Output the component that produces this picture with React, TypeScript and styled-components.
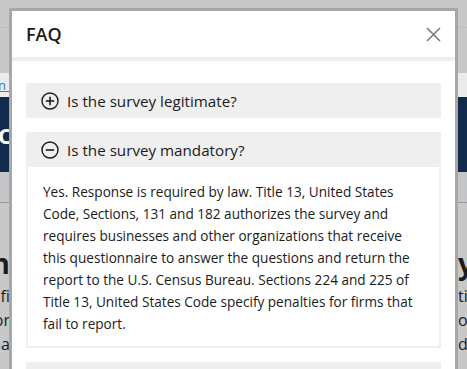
import styled, { createGlobalStyle } from "styled-components";

const GlobalStyle = createGlobalStyle`
  html, body {
    margin: 0;
    padding: 0;
    overflow: hidden;
    font-family: "Open Sans", "Noto Sans", sans-serif;
    color: #1b1b1b;
  }
`;

const Page = styled.div`
  width: 467px;
  height: 369px;
  background: #c8c8c8;
  display: flex;
  flex-direction: column;
`;

const TopBar = styled.div`
  height: 27px;
  border-bottom: 1px solid #bdbdbd;
`;

const SubBar = styled.div`
  height: 45px;
`;

const LinkBar = styled.div`
  height: 24px;
  background: #ebebeb;
  display: flex;
  align-items: center;
  overflow: hidden;

  a {
    width: 12px;
    overflow: hidden;
    margin-left: -2px;
    font-size: 13px;
    color: #2e7bcf;
    text-decoration: underline;
    white-space: nowrap;
  }
`;

const Hero = styled.div`
  height: 75px;
  background: #122b4c;
  display: flex;
  align-items: center;
  overflow: hidden;

  h1 {
    width: 12px;
    overflow: hidden;
    margin: 0 0 0 -2px;
    font-size: 22px;
    font-weight: 700;
    color: #ffffff;
    white-space: nowrap;
  }
`;

const NavBar = styled.div`
  height: 30px;
  background: #c5c6c9;
  border-bottom: 1px solid #9a9a9a;
`;

const Content = styled.div`
  flex: 1;
  display: flex;
  justify-content: space-between;
  padding-top: 44px;
  overflow: hidden;
`;

const Column = styled.div<{ $side: "left" | "right" }>`
  display: flex;
  flex-direction: column;
  align-items: ${({ $side }) => ($side === "left" ? "flex-end" : "flex-start")};
  width: 30px;
  margin-left: ${({ $side }) => ($side === "left" ? "-20px" : "0")};
  margin-right: ${({ $side }) => ($side === "right" ? "-21px" : "0")};
  white-space: nowrap;
  overflow: hidden;

  h2 {
    margin: 0 0 5px;
    font-size: 28px;
    line-height: 32px;
    font-weight: 700;
  }

  p {
    margin: 0;
    font-size: 16px;
    line-height: 24px;
  }
`;

const Modal = styled.div`
  position: fixed;
  top: 8px;
  left: 9px;
  width: 443px;
  height: 400px;
  background: #ffffff;
  border: 3px solid #a7a7a7;
  border-bottom: none;
  overflow: hidden;
`;

const ModalHeader = styled.div`
  height: 46px;
  padding: 0 14px;
  display: flex;
  align-items: center;
  justify-content: space-between;
  border-bottom: 4px solid #efefef;

  h2 {
    margin: 0;
    font-size: 18px;
    font-weight: 600;
    color: #1b1b1b;
  }
`;

const CloseButton = styled.button`
  width: 16px;
  height: 16px;
  padding: 0;
  border: none;
  background: none;
  display: flex;
  align-items: center;
  justify-content: center;
  cursor: pointer;
`;

const ModalBody = styled.div`
  padding: 22px 14px;
  display: flex;
  flex-direction: column;
  gap: 14px;
`;

const Item = styled.div`
  display: flex;
  flex-direction: column;
`;

const ItemHeader = styled.button`
  height: 35px;
  padding: 0 0 0 15px;
  border: none;
  background: #efefef;
  display: flex;
  align-items: center;
  gap: 8px;
  font-family: inherit;
  font-size: 15.2px;
  color: #1b1b1b;
  text-align: left;
  cursor: pointer;
`;

const Panel = styled.div`
  border: 2px solid #efefef;
  border-top: none;
  padding: 14px 15px 11px;
  font-size: 13.6px;
  line-height: 22px;
  color: #1b1b1b;
`;

const ToggleIcon = ({ open }: { open: boolean }) => (
  <svg width="18" height="18" viewBox="0 0 18 18" fill="none">
    <circle cx="9" cy="9" r="8" stroke="#1b1b1b" strokeWidth="1.4" />
    <line x1="4.8" y1="9" x2="13.2" y2="9" stroke="#1b1b1b" strokeWidth="1.6" />
    {!open && (
      <line x1="9" y1="4.8" x2="9" y2="13.2" stroke="#1b1b1b" strokeWidth="1.6" />
    )}
  </svg>
);

const faqs = [
  { q: "Is the survey legitimate?", a: "" },
  {
    q: "Is the survey mandatory?",
    a: "Yes. Response is required by law. Title 13, United States Code, Sections, 131 and 182 authorizes the survey and requires businesses and other organizations that receive this questionnaire to answer the questions and return the report to the U.S. Census Bureau. Sections 224 and 225 of Title 13, United States Code specify penalties for firms that fail to report.",
  },
  { q: "How do I report?", a: "" },
];

const openIndex = 1;

export default function App() {
  return (
    <>
      <GlobalStyle />
      <Page>
        <TopBar />
        <SubBar />
        <LinkBar>
          <a>n kn</a>
        </LinkBar>
        <Hero>
          <h1>Ce</h1>
        </Hero>
        <NavBar />
        <Content>
          <Column $side="left">
            <h2>n</h2>
            <p>nfi</p>
            <p>or</p>
            <p>na</p>
          </Column>
          <Column $side="right">
            <h2>y</h2>
            <p>tia</p>
            <p>oc</p>
            <p>d</p>
          </Column>
        </Content>
      </Page>

      <Modal>
        <ModalHeader>
          <h2>FAQ</h2>
          <CloseButton aria-label="Close">
            <svg width="15" height="15" viewBox="0 0 15 15">
              <path d="M1 1 L14 14 M14 1 L1 14" stroke="#777777" strokeWidth="1.5" />
            </svg>
          </CloseButton>
        </ModalHeader>
        <ModalBody>
          {faqs.map((item, index) => (
            <Item key={index}>
              <ItemHeader>
                <ToggleIcon open={index === openIndex} />
                {item.q}
              </ItemHeader>
              {index === openIndex && <Panel>{item.a}</Panel>}
            </Item>
          ))}
        </ModalBody>
      </Modal>
    </>
  );
}
